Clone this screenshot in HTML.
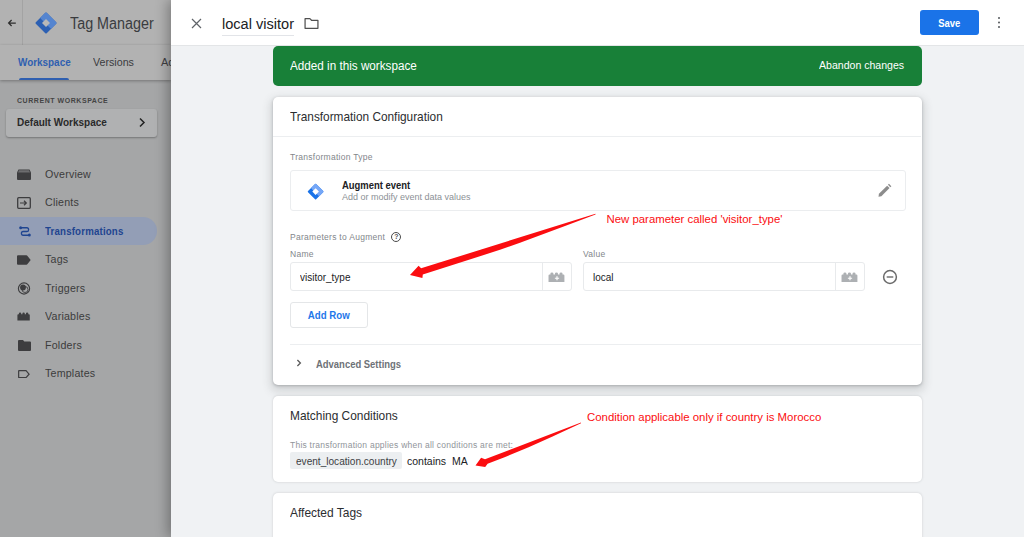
<!DOCTYPE html>
<html><head><meta charset="utf-8">
<style>
*{box-sizing:border-box;margin:0;padding:0}
html,body{width:1024px;height:537px;overflow:hidden;background:#f0f2f4;font-family:"Liberation Sans",sans-serif;color:#202124}
.abs{position:absolute}
#left{position:absolute;left:0;top:0;width:171px;height:537px;background:#a5a6a7;overflow:hidden}
#lhead{position:absolute;left:0;top:0;width:171px;height:46px;background:#b2b2b2;border-bottom:1px solid #a3a3a3}
#ltabs{position:absolute;left:0;top:45px;width:171px;height:35px;background:#b2b2b2;box-shadow:0 1px 3px rgba(0,0,0,.3)}
#right{position:absolute;left:171px;top:0;width:853px;height:537px;background:#f0f2f4;box-shadow:-3px 0 12px rgba(0,0,0,.32)}
#rhead{position:absolute;left:0;top:0;width:853px;height:46px;background:#fff;border-bottom:1px solid #e3e5e7}
.card{position:absolute;left:102px;width:649px;background:#fff;border-radius:5px}
.nav{position:absolute;left:45px;font-size:11px;color:#3c3c3c;letter-spacing:.2px;transform:scaleX(.97);transform-origin:0 0;white-space:nowrap}
.t{position:absolute;white-space:nowrap}
.sx{transform-origin:0 0}
</style></head><body>
<div id="left">
  <div id="lhead">
    <div class="abs" style="left:22px;top:0;width:1px;height:45px;background:#a3a3a3"></div>
    <svg class="abs" style="left:7px;top:18px" width="10" height="10" viewBox="0 0 10 10"><path d="M8.800 5H1.800M4.600 2L1.600 5l3 3" fill="none" stroke="#2e2e2e" stroke-width="1.250"/></svg>
    <svg class="abs" style="left:35.300px;top:12px" width="22" height="22" viewBox="0 0 22 22"><path d="M11 1.500L20.500 11 11 20.500 1.500 11z" fill="#2c60b3" stroke="#2c60b3" stroke-width="2" stroke-linejoin="round"/><path d="M11 1.500L20.500 11 16 15.500 6.500 6z" fill="#5585d0" stroke="#5585d0" stroke-width="2" stroke-linejoin="round"/><path d="M11 7L15 11 11 15 7 11z" fill="#b8b8b8"/></svg>
    <div class="t sx" style="left:69.600px;top:14.500px;font-size:15.600px;color:#3a3c3f;transform:scaleX(.92)">Tag Manager</div>
  </div>
  <div id="ltabs">
    <div class="t sx" style="left:18px;top:11px;font-size:11px;color:#2f5fb0;font-weight:bold;transform:scaleX(.9)">Workspace</div>
    <div class="t" style="left:93px;top:11px;font-size:11px;color:#3a3b3e;transform:scaleX(.97);transform-origin:0 0">Versions</div>
    <div class="t" style="left:161px;top:11px;font-size:11px;color:#3f4043">Ad</div>
    <div class="abs" style="left:19px;top:33px;width:50px;height:2px;background:#2f5fb0;border-radius:2px 2px 0 0"></div>
  </div>
  <div class="t" style="left:17px;top:97px;font-size:7px;color:#444;letter-spacing:.55px;font-weight:bold">CURRENT WORKSPACE</div>
  <div class="abs" style="left:6px;top:109px;width:151px;height:28px;background:#b0b1b2;border-radius:3px;box-shadow:0 1px 2px rgba(0,0,0,.3)"></div>
  <div class="t sx" style="left:17px;top:116px;font-size:11px;font-weight:bold;color:#2a2a2a;transform:scaleX(.91)">Default Workspace</div>
  <svg class="abs" style="left:138px;top:117px" width="8" height="11" viewBox="0 0 8 11"><path d="M2 1.500l4 4-4 4" fill="none" stroke="#222" stroke-width="1.500"/></svg>

  <div class="abs" style="left:0;top:217px;width:157px;height:28px;background:#939eb6;border-radius:0 14px 14px 0"></div>
  <!-- icons -->
  <svg class="abs" style="left:17px;top:169px" width="14" height="11" viewBox="0 0 14 11"><path d="M1.500 .5h11l1.500 3v6.500a1 1 0 0 1-1 1h-12a1 1 0 0 1-1-1v-6.500z" fill="#3d3d3f"/><path d="M2 1.200h10l1 2.300h-12z" fill="#6d6d6f"/></svg>
  <svg class="abs" style="left:17px;top:197px" width="14" height="12" viewBox="0 0 14 12"><rect x=".7" y=".7" width="12.600" height="10.600" rx="1" fill="none" stroke="#3d3d3f" stroke-width="1.300"/><path d="M3 6h6M7 3.800L9.300 6 7 8.200" fill="none" stroke="#3d3d3f" stroke-width="1.200"/></svg>
  <svg class="abs" style="left:18.800px;top:226px" width="12" height="10.800" viewBox="0 0 13 11" preserveAspectRatio="none"><circle cx="1.800" cy="1.800" r="1.600" fill="#1f4590"/><circle cx="11.200" cy="9.200" r="1.600" fill="#1f4590"/><path d="M3 1.800h5.500a1.900 1.900 0 0 1 0 3.800h-4a1.900 1.900 0 0 0 0 3.800h5.500" fill="none" stroke="#1f4590" stroke-width="1.400"/></svg>
  <svg class="abs" style="left:17px;top:255px" width="14" height="10" viewBox="0 0 14 10"><path d="M1 .3h8.500a1 1 0 0 1 .8.400L13.700 5l-3.400 4.300a1 1 0 0 1-.8.400H1a1 1 0 0 1-1-1V1.300a1 1 0 0 1 1-1z" fill="#3d3d3f"/></svg>
  <svg class="abs" style="left:17px;top:282px" width="14" height="13" viewBox="0 0 14 13"><circle cx="7" cy="6.500" r="5.600" fill="none" stroke="#3d3d3f" stroke-width="1.150"/><circle cx="6" cy="5.500" r="2.900" fill="#3d3d3f"/><circle cx="8" cy="7.500" r="3" fill="none" stroke="#3d3d3f" stroke-width=".9"/></svg>
  <svg class="abs" style="left:17px;top:312.300px" width="14" height="8.500" viewBox="0 0 17 10" preserveAspectRatio="none"><path d="M.5 3.500q0-1 1-1h.8V1.600q0-1 1.400-1t1.400 1v.9h1.500V1.600q0-1 1.400-1t1.400 1v.9h1.500V1.600q0-1 1.400-1t1.400 1v.9h.8q1 0 1 1V10H.5z" fill="#3d3d3f"/></svg>
  <svg class="abs" style="left:18px;top:340px" width="13" height="11" viewBox="0 0 13 11"><path d="M1 0h4l1.300 1.500H12a1 1 0 0 1 1 1V10a1 1 0 0 1-1 1H1a1 1 0 0 1-1-1V1a1 1 0 0 1 1-1z" fill="#3d3d3f"/></svg>
  <svg class="abs" style="left:18.300px;top:370px" width="12" height="8.300" viewBox="0 0 13 9"><path d="M1.200 .7h7.500L12 4.500 8.700 8.300H1.200a.5 .5 0 0 1-.5-.5V1.200a.5 .5 0 0 1 .5-.5z" fill="none" stroke="#3d3d3f" stroke-width="1.300"/></svg>

  <div class="nav" style="top:168px">Overview</div>
  <div class="nav" style="top:196px">Clients</div>
  <div class="nav sx" style="top:225px;color:#1f4590;font-weight:bold;transform:scaleX(.88)">Transformations</div>
  <div class="nav" style="top:253px">Tags</div>
  <div class="nav" style="top:282px">Triggers</div>
  <div class="nav" style="top:310px">Variables</div>
  <div class="nav" style="top:339px">Folders</div>
  <div class="nav" style="top:367px">Templates</div>
</div>
<div id="right">
  <div id="rhead">
    <svg class="abs" style="left:20px;top:18px" width="11" height="11" viewBox="0 0 11 11"><path d="M1 1l9 9M10 1l-9 9" stroke="#5f6368" stroke-width="1.200" fill="none"/></svg>
    <div class="t sx" style="left:51px;top:15.500px;font-size:14px;color:#202124;transform:scaleX(1.040)">local visitor</div>
    <div class="abs" style="left:51px;top:34.500px;width:72px;height:1px;background:#e2e4e8"></div>
    <svg class="abs" style="left:132.500px;top:16.800px" width="15" height="13" viewBox="0 0 14 12"><path d="M1 1.500h4.500l1.500 1.500h6v7.500h-12z" fill="none" stroke="#505050" stroke-width="1.150" stroke-linejoin="round"/></svg>
    <div class="abs" style="left:749px;top:9.600px;width:58.500px;height:25.400px;background:#1a73e8;border-radius:3px;color:#fff;font-size:10.500px;font-weight:bold;text-align:center;line-height:26.600px"><span style="display:inline-block;transform:scaleX(.9)">Save</span></div>
    <div class="abs" style="left:826.700px;top:17.200px;width:2.300px;height:2.300px;background:#55585c;border-radius:50%;box-shadow:0 4.500px 0 #55585c,0 9px 0 #55585c"></div>
  </div>
  <div class="abs" style="left:102px;top:45.500px;width:649px;height:40px;background:#188038;border-radius:5px"></div>
  <div class="t sx" style="left:119px;top:58.500px;font-size:12px;color:#fff;transform:scaleX(.975)">Added in this workspace</div>
  <div class="t sx" style="left:648px;top:59px;font-size:11px;color:#fff;transform:scaleX(.96)">Abandon changes</div>

  <div class="card" style="top:97px;height:288px;box-shadow:0 1px 3px rgba(60,64,67,.3),0 4px 8px 3px rgba(60,64,67,.15)">
    <div class="t sx" style="left:17px;top:12px;font-size:13px;color:#2b2d30;transform:scaleX(.91)">Transformation Configuration</div>
    <div class="abs" style="left:0;top:39px;width:648px;height:1px;background:#eceef0"></div>
    <div class="t" style="left:17px;top:55px;font-size:8.500px;color:#82868b;letter-spacing:.28px">Transformation Type</div>
    <div class="abs" style="left:17px;top:73px;width:616px;height:41px;border:1px solid #ebedef;border-radius:3px"></div>
    <svg class="abs" style="left:34px;top:85.800px" width="17.200" height="17.200" viewBox="0 0 22 22"><path d="M11 2L20 11 11 20 2 11z" fill="#1a73e8" stroke="#1a73e8" stroke-width="2" stroke-linejoin="round"/><path d="M11 2L20 11 15.500 15.500 6.500 6.500z" fill="#75a7f7" stroke="#75a7f7" stroke-width="2" stroke-linejoin="round"/><path d="M11 6.800L15.200 11 11 15.200 6.800 11z" fill="#fff"/></svg>
    <div class="t sx" style="left:69px;top:81.500px;font-size:10.500px;font-weight:bold;transform:scaleX(.9)">Augment event</div>
    <div class="t" style="left:69px;top:95px;font-size:9px;color:#8c9196">Add or modify event data values</div>
    <svg class="abs" style="left:604px;top:86.300px" width="15.200" height="15.200" viewBox="0 0 15 15"><path d="M1.500 13.500l.4-2.800L10 2.600l2.400 2.400-8.100 8.100z" fill="#8c8c8c"/><path d="M10.800 1.800l1-1 2.400 2.400-1 1z" fill="#8c8c8c"/></svg>

    <div class="t" style="left:17px;top:135px;font-size:8.500px;color:#82868b;letter-spacing:.28px">Parameters to Augment</div>
    <div class="abs" style="left:118.300px;top:134.800px;width:10px;height:10px;border:1.100px solid #4a4a4a;border-radius:50%;font-size:7px;line-height:8px;text-align:center;color:#555;font-weight:bold">?</div>
    <div class="t" style="left:17px;top:152px;font-size:8.500px;color:#82868b;letter-spacing:.28px">Name</div>
    <div class="t" style="left:310px;top:152px;font-size:8.500px;color:#82868b;letter-spacing:.28px">Value</div>
    <div class="abs" style="left:17px;top:165px;width:282px;height:29px;border:1px solid #e8eaec;border-radius:3px"></div>
    <div class="abs" style="left:269px;top:166px;width:1px;height:27px;background:#e8eaec"></div>
    <div class="t sx" style="left:27px;top:174px;font-size:10.500px;transform:scaleX(.95)">visitor_type</div>
    <div class="abs" style="left:310px;top:165px;width:282px;height:29px;border:1px solid #e8eaec;border-radius:3px"></div>
    <div class="abs" style="left:562px;top:166px;width:1px;height:27px;background:#e8eaec"></div>
    <div class="t sx" style="left:320px;top:174px;font-size:10.500px;transform:scaleX(.95)">local</div>
    <svg class="abs" style="left:274.800px;top:174.500px" width="18" height="10" viewBox="0 0 17 10" preserveAspectRatio="none"><path d="M.5 3.500q0-1 1-1h.8V1.600q0-1 1.400-1t1.400 1v.9h1.500V1.600q0-1 1.400-1t1.400 1v.9h1.500V1.600q0-1 1.400-1t1.400 1v.9h.8q1 0 1 1V10H.5z" fill="#adb0b3"/><path d="M8.500 4.200v4M6.500 6.200h4" stroke="#fff" stroke-width="1.100" fill="none"/></svg>
    <svg class="abs" style="left:567.800px;top:174.500px" width="18" height="10" viewBox="0 0 17 10" preserveAspectRatio="none"><path d="M.5 3.500q0-1 1-1h.8V1.600q0-1 1.400-1t1.400 1v.9h1.500V1.600q0-1 1.400-1t1.400 1v.9h1.500V1.600q0-1 1.400-1t1.400 1v.9h.8q1 0 1 1V10H.5z" fill="#adb0b3"/><path d="M8.500 4.200v4M6.500 6.200h4" stroke="#fff" stroke-width="1.100" fill="none"/></svg>
    <svg class="abs" style="left:609.200px;top:171.900px" width="16" height="16" viewBox="0 0 16 16"><circle cx="8" cy="8" r="6.400" fill="none" stroke="#6a6a6a" stroke-width="1.500"/><path d="M4.700 8h6.600" stroke="#6a6a6a" stroke-width="1.400"/></svg>
    

    <div class="abs" style="left:17px;top:205px;width:78px;height:26px;border:1px solid #e4e6e8;border-radius:3px;color:#1f78ea;font-size:10.500px;font-weight:bold;text-align:center;line-height:24px"><span style="display:inline-block;transform:scaleX(.92)">Add Row</span></div>
    <div class="abs" style="left:17px;top:247px;width:631px;height:1px;background:#eceef0"></div>
    <svg class="abs" style="left:23px;top:262px" width="6" height="8" viewBox="0 0 6 8"><path d="M1.400 1l3 3-3 3" fill="none" stroke="#5a5a5a" stroke-width="1.300"/></svg>
    <div class="t sx" style="left:43px;top:260.600px;font-size:10.500px;font-weight:bold;color:#6e7277;transform:scaleX(.9)">Advanced Settings</div>
  </div>

  <div class="card" style="top:396px;height:86px;box-shadow:0 0 2.500px rgba(60,64,67,.22)">
    <div class="t sx" style="left:17px;top:12px;font-size:13px;color:#2b2d30;transform:scaleX(.915)">Matching Conditions</div>
    <div class="t" style="left:17px;top:44px;font-size:8.500px;color:#90949a;letter-spacing:.24px">This transformation applies when all conditions are met:</div>
    <div class="abs" style="left:17px;top:56px;width:112px;height:17px;background:#eceff1;border-radius:2px"></div>
    <div class="t sx" style="left:23px;top:59px;font-size:10.500px;color:#3c4043;transform:scaleX(.96)">event_location.country</div>
    <div class="t" style="left:134px;top:59px;font-size:10.500px">contains</div>
    <div class="t" style="left:179px;top:59px;font-size:10.500px">MA</div>
  </div>
  <div class="card" style="top:493px;height:60px;box-shadow:0 0 2.500px rgba(60,64,67,.22)">
    <div class="t sx" style="left:17px;top:12px;font-size:13px;color:#2b2d30;transform:scaleX(.92)">Affected Tags</div>
  </div>
</div>
<!-- annotations -->
<svg class="abs" style="left:0;top:0" width="1024" height="537" viewBox="0 0 1024 537">
  <path d="M595.500 213.700L421.100 268.300 418.600 265.700 410 275 422.400 277.900 422.800 274.600 500 249.800 520 242.800 565 226 595.500 214.500z" fill="#fb0d10"/>
  <path d="M581 422.600L485 459.200 481.100 457.700 475.500 465.400 485.200 466.900 487.600 463.700 505.200 457 528.600 447.200 552 436.700 581 423.300z" fill="#fb0d10"/>
</svg>
<div class="t" style="left:606.500px;top:212.500px;font-size:11.400px;color:#fb0d10">New parameter called 'visitor_type'</div>
<div class="t" style="left:587px;top:410.700px;font-size:11.400px;color:#fb0d10">Condition applicable only if country is Morocco</div>
</body></html>
